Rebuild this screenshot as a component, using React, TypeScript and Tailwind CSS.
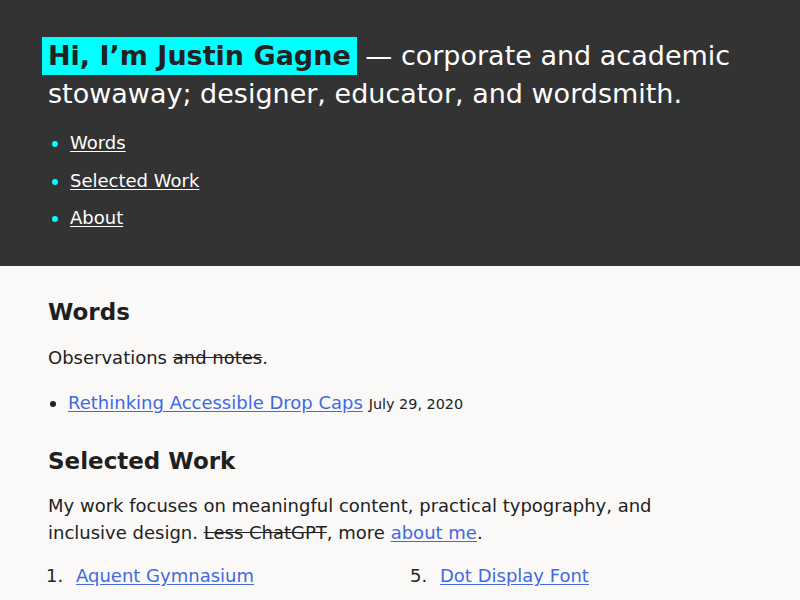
const font = { fontFamily: '"DejaVu Sans", sans-serif' }

const work = [
  "Aquent Gymnasium",
  "Web Accessibility Course",
  "Typography Workshop",
  "Design Systems",
  "Dot Display Font",
  "Drop Caps Demo",
  "Color Contrast Notes",
  "Personal Site",
]

export default function App() {
  return (
    <div className="min-h-screen bg-[#faf9f7] text-[#222]" style={font}>
      {/* Cabecera */}
      <header className="bg-[#333] text-white px-12 pt-[37px] pb-[29px]">
        <h1 className="text-[27px] leading-[38px] font-normal max-w-[704px]">
          <strong className="bg-[#00ffff] text-[#222] font-bold px-1.5 -ml-1.5 inline-block">Hi, I’m Justin Gagne</strong>{" "}
          — corporate and academic stowaway; designer, educator, and wordsmith.
        </h1>
        <ul className="mt-[11px] text-[18px] leading-[37.5px] list-disc pl-[22px] marker:text-[#00ffff]">
          <li><a href="#" className="underline underline-offset-2">Words</a></li>
          <li><a href="#" className="underline underline-offset-2">Selected Work</a></li>
          <li><a href="#" className="underline underline-offset-2">About</a></li>
        </ul>
      </header>

      <main className="px-12 pt-[31px]">
        <section>
          <h2 className="text-[23px] font-bold leading-[30px] text-[#1f1f1f]">Words</h2>
          <p className="mt-[17px] text-[18px] leading-[27px]">
            Observations <s>and notes</s>.
          </p>
          <ul className="mt-[18px] list-disc pl-5 text-[18px] leading-[27px]">
            <li>
              <a href="#" className="text-[#4169e1] underline underline-offset-2">Rethinking Accessible Drop Caps</a>{" "}
              <span className="text-[14.4px]">July 29, 2020</span>
            </li>
          </ul>
        </section>

        <section className="mt-[28px]">
          <h2 className="text-[23px] font-bold leading-[30px] text-[#1f1f1f]">Selected Work</h2>
          <p className="mt-[16px] text-[18px] leading-[27px] max-w-[648px]">
            My work focuses on meaningful content, practical typography, and inclusive design.{" "}
            <s>Less ChatGPT</s>, more <a href="#" className="text-[#4169e1] underline underline-offset-2">about me</a>.
          </p>
          <ol className="mt-[16px] pl-[28px] columns-2 gap-x-[52px] text-[18px] leading-[27px]">
            {work.map((w, i) => (
              <li key={w} className="flex mb-3 break-inside-avoid">
                <span className="-ml-[30px] w-[30px] shrink-0">{i + 1}.</span>
                <a href="#" className="text-[#4169e1] underline underline-offset-2">{w}</a>
              </li>
            ))}
          </ol>
        </section>
      </main>
    </div>
  )
}
